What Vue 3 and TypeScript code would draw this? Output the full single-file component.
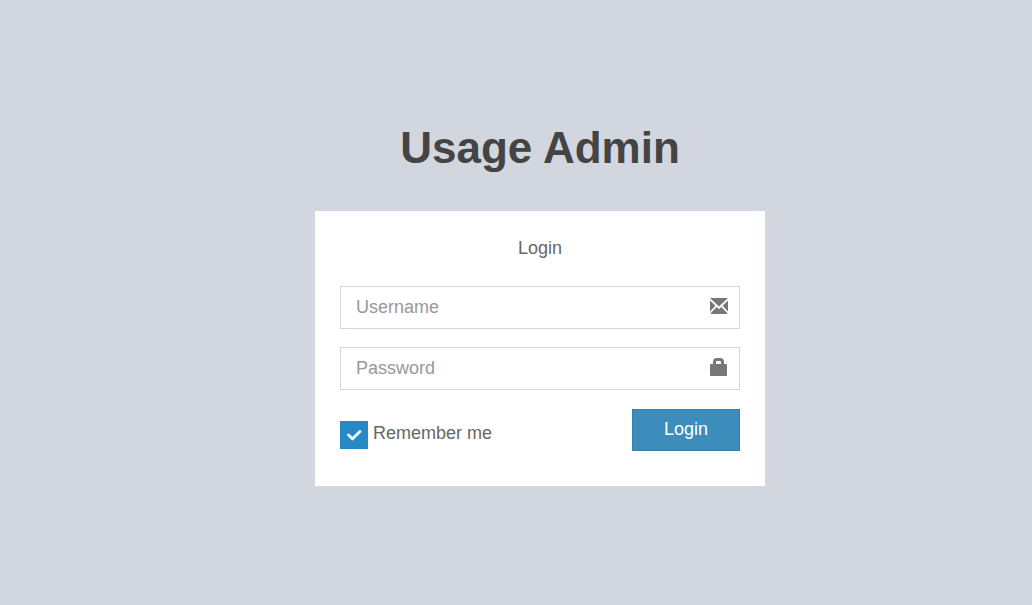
<script setup lang="ts">
import { ref } from 'vue'

const username = ref('')
const password = ref('')
const remember = ref(true)
</script>

<template>
  <main class="login-page">
    <div class="login-box">
      <h1 class="login-logo">Usage Admin</h1>
      <form class="login-body" @submit.prevent>
        <p class="login-message">Login</p>
        <div class="field">
          <input v-model="username" type="text" placeholder="Username" aria-label="Username" />
          <svg class="field-icon" viewBox="0 0 18 16" aria-hidden="true">
            <path d="M0 0h18L9 8.6z" />
            <path d="M0 2.4v11.1l5.4-5.7z" />
            <path d="M18 2.4v11.1l-5.4-5.7z" />
            <path d="M6.7 9 9 11.3 11.3 9 17.2 15v1H.8v-1z" />
          </svg>
        </div>
        <div class="field">
          <input v-model="password" type="password" placeholder="Password" aria-label="Password" />
          <svg class="field-icon lock" viewBox="0 0 18 18" aria-hidden="true">
            <path d="M1 6h2V3.5Q3.5 0 6.5 0h4Q13.5 0 14 3.5V6h2q1 0 1 1v10q0 1-1 1H1q-1 0-1-1V7q0-1 1-1zM6 6h5V4q0-1-1-1H7Q6 3 6 4z" />
          </svg>
        </div>
        <div class="actions">
          <label class="remember">
            <span class="check">
              <input v-model="remember" type="checkbox" />
              <svg v-if="remember" viewBox="0 0 28 28" aria-hidden="true">
                <path d="M8.5 14 12.5 17.8 20 10.5" />
              </svg>
            </span>
            <span class="remember-text">Remember me</span>
          </label>
          <button class="submit" type="submit">Login</button>
        </div>
      </form>
    </div>
  </main>
</template>

<style>
body {
  margin: 0;
  background: #d2d6de;
}
</style>

<style scoped>
.login-page {
  box-sizing: border-box;
  min-height: 100vh;
  padding: 117px 0 24px 48px;
  background: #d2d6de;
  color: #666;
  font-family: "Liberation Sans", Arial, sans-serif;
  font-size: 18px;
  line-height: 25px;
}

.login-box {
  width: 100%;
  max-width: 450px;
  margin: 0 auto;
}

.login-logo {
  margin: 0 0 32px;
  color: #444;
  font-size: 44px;
  font-weight: 700;
  line-height: 62px;
  text-align: center;
}

.login-body {
  padding: 25px 25px 35px;
  background: #fff;
}

.login-message {
  margin: 0;
  padding-bottom: 25px;
  text-align: center;
}

.field {
  position: relative;
  margin-bottom: 18px;
}

.field input {
  display: block;
  box-sizing: border-box;
  width: 100%;
  height: 43px;
  padding: 8px 52px 8px 15px;
  border: 1px solid #d2d6de;
  border-radius: 0;
  outline: 0;
  background: #fff;
  color: #555;
  font: inherit;
}

.field input::placeholder {
  color: #999;
  opacity: 1;
}

.field input:focus {
  border-color: #3c8dbc;
}

.field-icon {
  position: absolute;
  top: 12px;
  right: 12px;
  width: 18px;
  height: 16px;
  fill: #777;
  pointer-events: none;
}

.field-icon.lock {
  top: 11px;
  height: 18px;
}

.actions {
  display: flex;
  align-items: flex-start;
  justify-content: space-between;
  padding-top: 1px;
}

.remember {
  display: flex;
  gap: 5px;
  padding-top: 12px;
  cursor: pointer;
}

.check {
  display: grid;
  width: 28px;
  height: 28px;
}

.check input,
.check svg {
  grid-area: 1 / 1;
  width: 28px;
  height: 28px;
  margin: 0;
}

.check input {
  appearance: none;
  border: 1px solid #d2d6de;
  background: #fff;
}

.check input:checked {
  border-color: #2489c5;
  background: #2489c5;
}

.check svg {
  fill: none;
  stroke: #eef7fc;
  stroke-width: 3;
  stroke-linecap: round;
  stroke-linejoin: round;
  pointer-events: none;
}

.submit {
  box-sizing: border-box;
  width: 108px;
  height: 42px;
  padding: 0 15px 2px;
  border: 1px solid #367fa9;
  border-radius: 0;
  background: #3c8dbc;
  color: #fff;
  font: inherit;
  cursor: pointer;
}
</style>
